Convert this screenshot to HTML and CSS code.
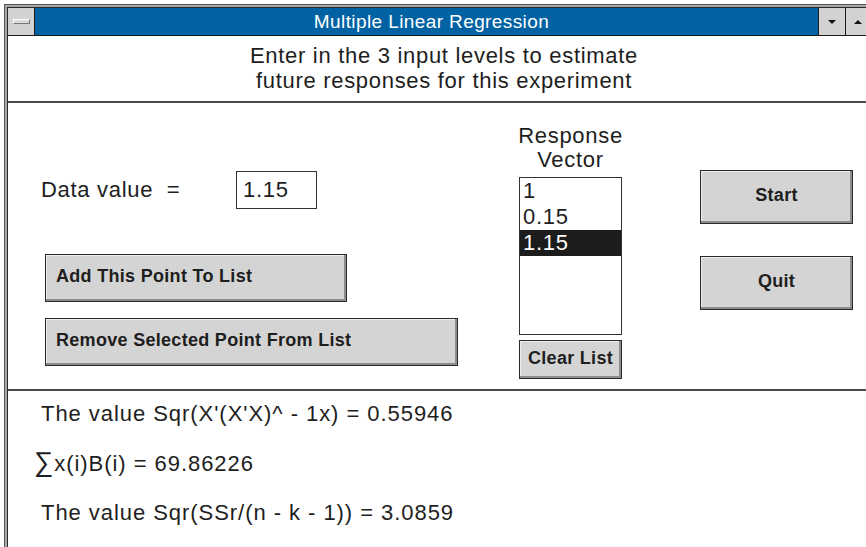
FILE: index.html
```html
<!DOCTYPE html>
<html>
  <head>
    <title>Multiple Linear Regression</title>
    <link rel="stylesheet" href="styles.css">
  </head>
  <body>
    <div class="frame">
    <div class="window">
      <div class="titlebar">
        <div class="sysbox"><span class="sysbar"></span></div>
        <div class="caption">Multiple Linear Regression</div>
        <div class="tbtn"><span class="tri-down"></span></div>
        <div class="tbtn tbtn-up"><span class="tri-up"></span></div>
      </div>

      <div class="intro">
        Enter in the 3 input levels to estimate<br>
        future responses for this experiment
      </div>

      <div class="inputs">
        <div class="leftcol">
          <div class="datarow">
            <span class="datalabel">Data value  =</span>
            <div class="databox">1.15</div>
          </div>
          <button class="btn btn-add">Add This Point To List</button>
          <button class="btn btn-remove">Remove Selected Point From List</button>
        </div>

        <div class="listcol">
          <div class="listlabel">Response<br>Vector</div>
          <ul class="listbox">
            <li>1</li>
            <li>0.15</li>
            <li class="selected">1.15</li>
          </ul>
          <button class="btn btn-clear">Clear List</button>
        </div>

        <div class="rightcol">
          <button class="btn btn-big">Start</button>
          <button class="btn btn-big btn-quit">Quit</button>
        </div>
      </div>

      <div class="results">
        <p>The value Sqr(X'(X'X)^ - 1x) = 0.55946</p>
        <p class="sum"><span class="sigma">∑</span>x(i)B(i) = 69.86226</p>
        <p>The value Sqr(SSr/(n - k - 1)) = 3.0859</p>
      </div>
    </div>
    </div>
  </body>
</html>
```

FILE: styles.css
```css
* {
    box-sizing: border-box;
  }
  body {
    margin: 0;
    overflow: hidden;
    background: white;
    font-family: "Liberation Sans", Arial, sans-serif;
    color: #1e1e1e;
  }
  .frame {
    margin: 4px 0 0 4px;
    width: 876px;
    height: 560px;
    padding: 2px 0 0 2px;
    background: #a8a8a8;
    border-left: 1px solid #555;
    border-top: 1px solid #555;
  }
  .window {
    height: 100%;
    background: white;
    border-left: 1px solid #2a2a2a;
    border-top: 1px solid #2a2a2a;
  }

  /* title bar */
  .titlebar {
    display: flex;
    height: 28px;
    background: #0062a3;
    border-bottom: 1px solid #1a1a1a;
  }
  .sysbox {
    width: 27px;
    display: flex;
    align-items: center;
    justify-content: center;
    background: #d2d2d2;
    border-right: 1px solid #1a1a1a;
  }
  .sysbar {
    width: 17px;
    height: 5px;
    background: #dadada;
    border: 1px solid #fff;
    border-right-color: #777;
    border-bottom-color: #777;
  }
  .caption {
    flex: 1;
    padding-left: 10px;
    text-align: center;
    color: white;
    font-size: 19px;
    letter-spacing: 0.4px;
    line-height: 27px;
  }
  .tbtn {
    width: 27px;
    display: flex;
    align-items: center;
    justify-content: center;
    background: #d2d2d2;
    border-left: 1px solid #1a1a1a;
  }
  .tbtn-up {
    width: 35px;
    justify-content: flex-start;
    padding-left: 8px;
  }
  .tri-down {
    border-left: 4px solid transparent;
    border-right: 4px solid transparent;
    border-top: 4px solid #111;
  }
  .tri-up {
    border-left: 4px solid transparent;
    border-right: 4px solid transparent;
    border-bottom: 4px solid #111;
  }

  /* header text */
  .intro {
    padding: 7px 0 8px;
    text-align: center;
    font-size: 22px;
    letter-spacing: 0.7px;
    line-height: 25px;
    border-bottom: 2px solid #4a4a4a;
  }

  /* middle part */
  .inputs {
    display: flex;
    align-items: flex-start;
    height: 288px;
    border-bottom: 2px solid #4a4a4a;
    font-size: 22px;
    letter-spacing: 0.7px;
  }
  .leftcol {
    width: 511px;
    padding: 68px 0 0 33px;
  }
  .datarow {
    display: flex;
    align-items: center;
    height: 38px;
  }
  .datalabel {
    width: 195px;
    white-space: pre;
  }
  .databox {
    width: 81px;
    height: 38px;
    padding-left: 6px;
    line-height: 36px;
    border: 1px solid #333;
  }
  .btn {
    display: flex;
    align-items: center;
    padding: 0 0 3px 0;
    background: #d4d4d4;
    border: 1px solid #2b2b2b;
    box-shadow: inset -2px -2px 0 #8c8c8c, inset 1px 1px 0 #ececec;
    font-family: "Liberation Sans", Arial, sans-serif;
    font-size: 18px;
    font-weight: bold;
    letter-spacing: 0.3px;
    color: #1e1e1e;
    cursor: pointer;
  }
  .btn-add {
    width: 302px;
    height: 48px;
    margin: 45px 0 0 4px;
    padding-left: 10px;
  }
  .btn-remove {
    width: 413px;
    height: 48px;
    margin: 16px 0 0 4px;
    padding-left: 10px;
  }

  .listcol {
    width: 103px;
    padding-top: 21px;
  }
  .listlabel {
    margin: 0 -3px 5px;
    text-align: center;
    line-height: 24px;
  }
  .listbox {
    list-style: none;
    margin: 0;
    padding: 0;
    height: 158px;
    border: 1px solid #333;
  }
  .listbox li {
    padding-left: 3px;
    line-height: 26px;
  }
  .listbox .selected {
    background: #1c1c1c;
    color: white;
  }
  .btn-clear {
    width: 103px;
    height: 39px;
    margin-top: 5px;
    justify-content: center;
    padding-bottom: 2px;
  }

  .rightcol {
    width: 153px;
    margin-left: 78px;
    padding-top: 67px;
  }
  .btn-big {
    width: 153px;
    height: 54px;
    justify-content: center;
  }
  .btn-quit {
    margin-top: 32px;
  }

  /* results */
  .results {
    padding: 10px 0 0 33px;
    font-size: 22px;
    letter-spacing: 0.95px;
  }
  .results p {
    margin: 0 0 24px;
    line-height: 25px;
  }
  .results .sum {
    margin-left: -7px;
  }
  .sigma {
    font-size: 27px;
    letter-spacing: 0;
    margin-right: 1px;
  }
```
